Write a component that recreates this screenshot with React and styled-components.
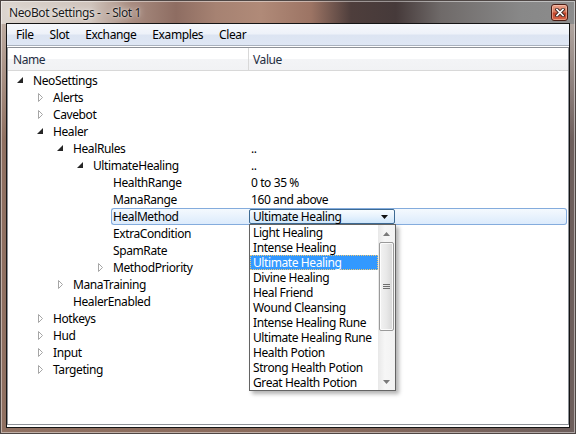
import styled, { createGlobalStyle } from 'styled-components';

const GlobalStyle = createGlobalStyle`
  html, body { margin: 0; padding: 0; background: #fff; }
  body { font-family: "Noto Sans", "Open Sans", sans-serif; font-size: 12px; letter-spacing: -0.4px; color: #000; }
`

const Window = styled.div`
  width: 576px;
  height: 434px;
  box-sizing: border-box;
  display: flex;
  flex-direction: column;
  border: 1px solid #4e4644;
  box-shadow: inset 0 0 0 1px rgba(255,255,255,0.45);
  padding: 0 5px 5px 5px;
  background:
    linear-gradient(90deg, #dcd5cf 0px, #cfc3bb 90px, #a88c80 130px, #8e6d62 175px, #a68272 215px,
      #b08a78 260px, #9c7464 310px, #4e3e3c 350px, #463a3a 395px, #6f6a69 440px, #888 520px, #8c8c8c 576px) top / 100% 23px no-repeat,
    linear-gradient(180deg, rgba(210,200,192,0.8) 0px, rgba(210,200,192,0) 140px),
    linear-gradient(90deg, #8f7061 0%, #8a6a5b 55%, #6d5e5c 100%);
`

const TitleBar = styled.div`
  height: 22px;
  display: flex;
  align-items: center;
  justify-content: space-between;
  padding: 0 2px 0 3px;
  color: #1b1b1b;
  text-shadow: 0 0 6px rgba(255,255,255,0.9), 0 0 2px rgba(255,255,255,0.7);
`

const CloseButton = styled.div`
  width: 17px;
  height: 17px;
  box-sizing: border-box;
  border: 1px solid #4a1c14;
  border-radius: 3px;
  background: linear-gradient(180deg, #eaa28c 0%, #d77a5e 45%, #c0442a 55%, #d8674a 100%);
  box-shadow: inset 0 0 0 1px rgba(255,220,200,0.45);
  display: flex;
  align-items: center;
  justify-content: center;
  margin-top: 1px;
`

const Client = styled.div`
  flex: 1;
  display: flex;
  flex-direction: column;
  border: 1px solid #151515;
  background: #fff;
  min-height: 0;
`

const MenuBar = styled.div`
  height: 21px;
  display: flex;
  align-items: center;
  padding-left: 1px;
  border-bottom: 1px solid #a9b1bd;
  background: linear-gradient(180deg, #f6f8fc 0%, #eef2f9 45%, #dce4f2 55%, #dfe7f4 100%);
`

const MenuItem = styled.div`
  padding: 0 8px;
  line-height: 22px;
`

const ListBox = styled.div`
  flex: 1;
  margin: 1px 0 2px 0;
  border: 1px solid #8e9298;
  display: flex;
  flex-direction: column;
  min-height: 0;
`

const HeaderRow = styled.div`
  height: 22px;
  display: flex;
  border-bottom: 1px solid #d8d8d8;
  background: linear-gradient(180deg, #fff 0%, #fff 48%, #f3f4f6 52%, #f1f2f4 100%);
`

const HeaderCell = styled.div`
  width: ${({w}) => w ? `${w}px` : 'auto'};
  flex: ${({w}) => w ? 'none' : '1'};
  box-sizing: border-box;
  padding-left: ${({pad}) => pad}px;
  padding-top: 2px;
  line-height: 20px;
  border-right: ${({w}) => w ? '1px solid #d8d8d8' : 'none'};
  color: #1e2d3f;
`

const Rows = styled.div`
  padding-top: 1px;
  display: flex;
  flex-direction: column;
`

const Row = styled.div`
  height: 17px;
  display: flex;
  line-height: 15px;
`

const NameCell = styled.div`
  width: 241px;
  flex: none;
  box-sizing: border-box;
  display: flex;
  padding-left: ${({level}) => 9 + level * 20}px;
`

const Expander = styled.div`
  width: 14px;
  height: 17px;
  flex: none;
`

const Label = styled.div`
  flex: 1;
  box-sizing: border-box;
  height: 17px;
  padding-left: 1px;
  border: 1px solid transparent;
  border-right: none;
  border-radius: 3px 0 0 3px;
  white-space: nowrap;
  ${({sel}) => sel ? `
    border-color: #84acdd;
    background: linear-gradient(180deg, #f4f9fe 0%, #dcebfc 100%);
  ` : ''}
`

const ValueCell = styled.div`
  flex: 1;
  box-sizing: border-box;
  height: 17px;
  padding-left: 2px;
  margin-right: 1px;
  border: 1px solid transparent;
  border-left: none;
  border-radius: 0 3px 3px 0;
  white-space: nowrap;
  ${({sel}) => sel ? `
    border-color: #84acdd;
    background: linear-gradient(180deg, #f4f9fe 0%, #dcebfc 100%);
    padding-left: 0;
  ` : ''}
`

const ComboWrap = styled.div`
  position: relative;
  width: 146px;
`

const Combo = styled.div`
  height: 15px;
  box-sizing: border-box;
  border: 1px solid #3d6a93;
  border-radius: 2px;
  background: linear-gradient(180deg, #f8fcff 0%, #e6f2fd 50%, #cfe6fb 100%);
  display: flex;
  align-items: center;
  justify-content: space-between;
  padding: 0 6px 0 3px;
  line-height: 13px;
`

const DropList = styled.div`
  position: absolute;
  top: 15px;
  left: 0;
  width: 147px;
  height: 167px;
  box-sizing: border-box;
  border: 1px solid #646464;
  background: #fff;
  box-shadow: 3px 3px 4px rgba(0,0,0,0.3);
  display: flex;
  z-index: 5;
`

const Options = styled.div`
  flex: 1;
  min-width: 0;
  overflow: hidden;
  display: flex;
  flex-direction: column;
`

const Option = styled.div`
  height: 15px;
  flex: none;
  line-height: 14px;
  box-sizing: border-box;
  padding-left: 2px;
  border: 1px dotted transparent;
  white-space: nowrap;
  ${({sel}) => sel ? `
    background: #3399ff;
    color: #fff;
    border-color: #f0c872;
  ` : ''}
`

const ScrollBar = styled.div`
  width: 17px;
  flex: none;
  display: flex;
  flex-direction: column;
  background: linear-gradient(90deg, #e8e8e8, #f6f6f6 40%, #f2f2f2);
`

const ScrollButton = styled.div`
  height: 17px;
  display: flex;
  align-items: center;
  justify-content: center;
`

const Track = styled.div`
  flex: 1;
  padding: 0 1px;
  display: flex;
  flex-direction: column;
`

const Thumb = styled.div`
  height: 89px;
  box-sizing: border-box;
  border: 1px solid #9a9a9a;
  border-radius: 2px;
  background: linear-gradient(90deg, #f3f3f3 0%, #e8e8e8 50%, #d6d6d6 100%);
  box-shadow: inset 0 0 0 1px rgba(255,255,255,0.8);
  display: flex;
  align-items: center;
  justify-content: center;
`

const Arrow = ({state}) => {
  if (state === 'open') {
    return (
      <svg width="14" height="17" viewBox="0 0 14 17">
        <polygon points="6,5 6,11 0,11" fill="#262626" />
      </svg>
    )
  }
  if (state === 'closed') {
    return (
      <svg width="14" height="17" viewBox="0 0 14 17">
        <polygon points="1.5,4.5 1.5,12.5 5.5,8.5" fill="#fff" stroke="#a6a6a6" />
      </svg>
    )
  }
  return null
}

const options = [
  'Light Healing', 'Intense Healing', 'Ultimate Healing', 'Divine Healing', 'Heal Friend',
  'Wound Cleansing', 'Intense Healing Rune', 'Ultimate Healing Rune', 'Health Potion',
  'Strong Health Potion', 'Great Health Potion',
]

const tree = [
  {level: 0, name: 'NeoSettings', state: 'open'},
  {level: 1, name: 'Alerts', state: 'closed'},
  {level: 1, name: 'Cavebot', state: 'closed'},
  {level: 1, name: 'Healer', state: 'open'},
  {level: 2, name: 'HealRules', state: 'open', value: '..'},
  {level: 3, name: 'UltimateHealing', state: 'open', value: '..'},
  {level: 4, name: 'HealthRange', value: '0 to 35 %'},
  {level: 4, name: 'ManaRange', value: '160 and above'},
  {level: 4, name: 'HealMethod', sel: true},
  {level: 4, name: 'ExtraCondition'},
  {level: 4, name: 'SpamRate'},
  {level: 4, name: 'MethodPriority', state: 'closed'},
  {level: 2, name: 'ManaTraining', state: 'closed'},
  {level: 2, name: 'HealerEnabled'},
  {level: 1, name: 'Hotkeys', state: 'closed'},
  {level: 1, name: 'Hud', state: 'closed'},
  {level: 1, name: 'Input', state: 'closed'},
  {level: 1, name: 'Targeting', state: 'closed'},
]

const menu = ['File', 'Slot', 'Exchange', 'Examples', 'Clear']

const Dropdown = () => (
  <ComboWrap>
    <Combo>
      <span>Ultimate Healing</span>
      <svg width="7" height="4" viewBox="0 0 7 4"><polygon points="0,0 7,0 3.5,4" fill="#111" /></svg>
    </Combo>
    <DropList>
      <Options>
        {options.map((o) => <Option key={o} sel={o === 'Ultimate Healing'}>{o}</Option>)}
      </Options>
      <ScrollBar>
        <ScrollButton>
          <svg width="7" height="4" viewBox="0 0 7 4"><polygon points="0,4 7,4 3.5,0" fill="#7a7a7a" /></svg>
        </ScrollButton>
        <Track>
          <Thumb>
            <svg width="7" height="5" viewBox="0 0 7 5">
              <path d="M0 0.5H7M0 2.5H7M0 4.5H7" stroke="#6f6f6f" strokeWidth="1" />
            </svg>
          </Thumb>
        </Track>
        <ScrollButton>
          <svg width="7" height="4" viewBox="0 0 7 4"><polygon points="0,0 7,0 3.5,4" fill="#7a7a7a" /></svg>
        </ScrollButton>
      </ScrollBar>
    </DropList>
  </ComboWrap>
)

const App = () => {
  return (
    <>
      <GlobalStyle />
      <Window>
        <TitleBar>
          <span>NeoBot Settings -&nbsp; - Slot 1</span>
          <CloseButton>
            <svg width="10" height="9" viewBox="0 0 10 9">
              <path d="M2 1.5L8 7.5M8 1.5L2 7.5" stroke="#3a2420" strokeWidth="3.4" strokeLinecap="square" />
              <path d="M2 1.5L8 7.5M8 1.5L2 7.5" stroke="#fff" strokeWidth="1.7" strokeLinecap="square" />
            </svg>
          </CloseButton>
        </TitleBar>
        <Client>
          <MenuBar>
            {menu.map((m) => <MenuItem key={m}>{m}</MenuItem>)}
          </MenuBar>
          <ListBox>
            <HeaderRow>
              <HeaderCell w={241} pad={5}>Name</HeaderCell>
              <HeaderCell pad={4}>Value</HeaderCell>
            </HeaderRow>
            <Rows>
              {tree.map((r) => (
                <Row key={r.name}>
                  <NameCell level={r.level}>
                    <Expander><Arrow state={r.state} /></Expander>
                    <Label sel={r.sel}>{r.name}</Label>
                  </NameCell>
                  <ValueCell sel={r.sel}>
                    {r.sel ? <Dropdown /> : r.value}
                  </ValueCell>
                </Row>
              ))}
            </Rows>
          </ListBox>
        </Client>
      </Window>
    </>
  )
}

export default App
